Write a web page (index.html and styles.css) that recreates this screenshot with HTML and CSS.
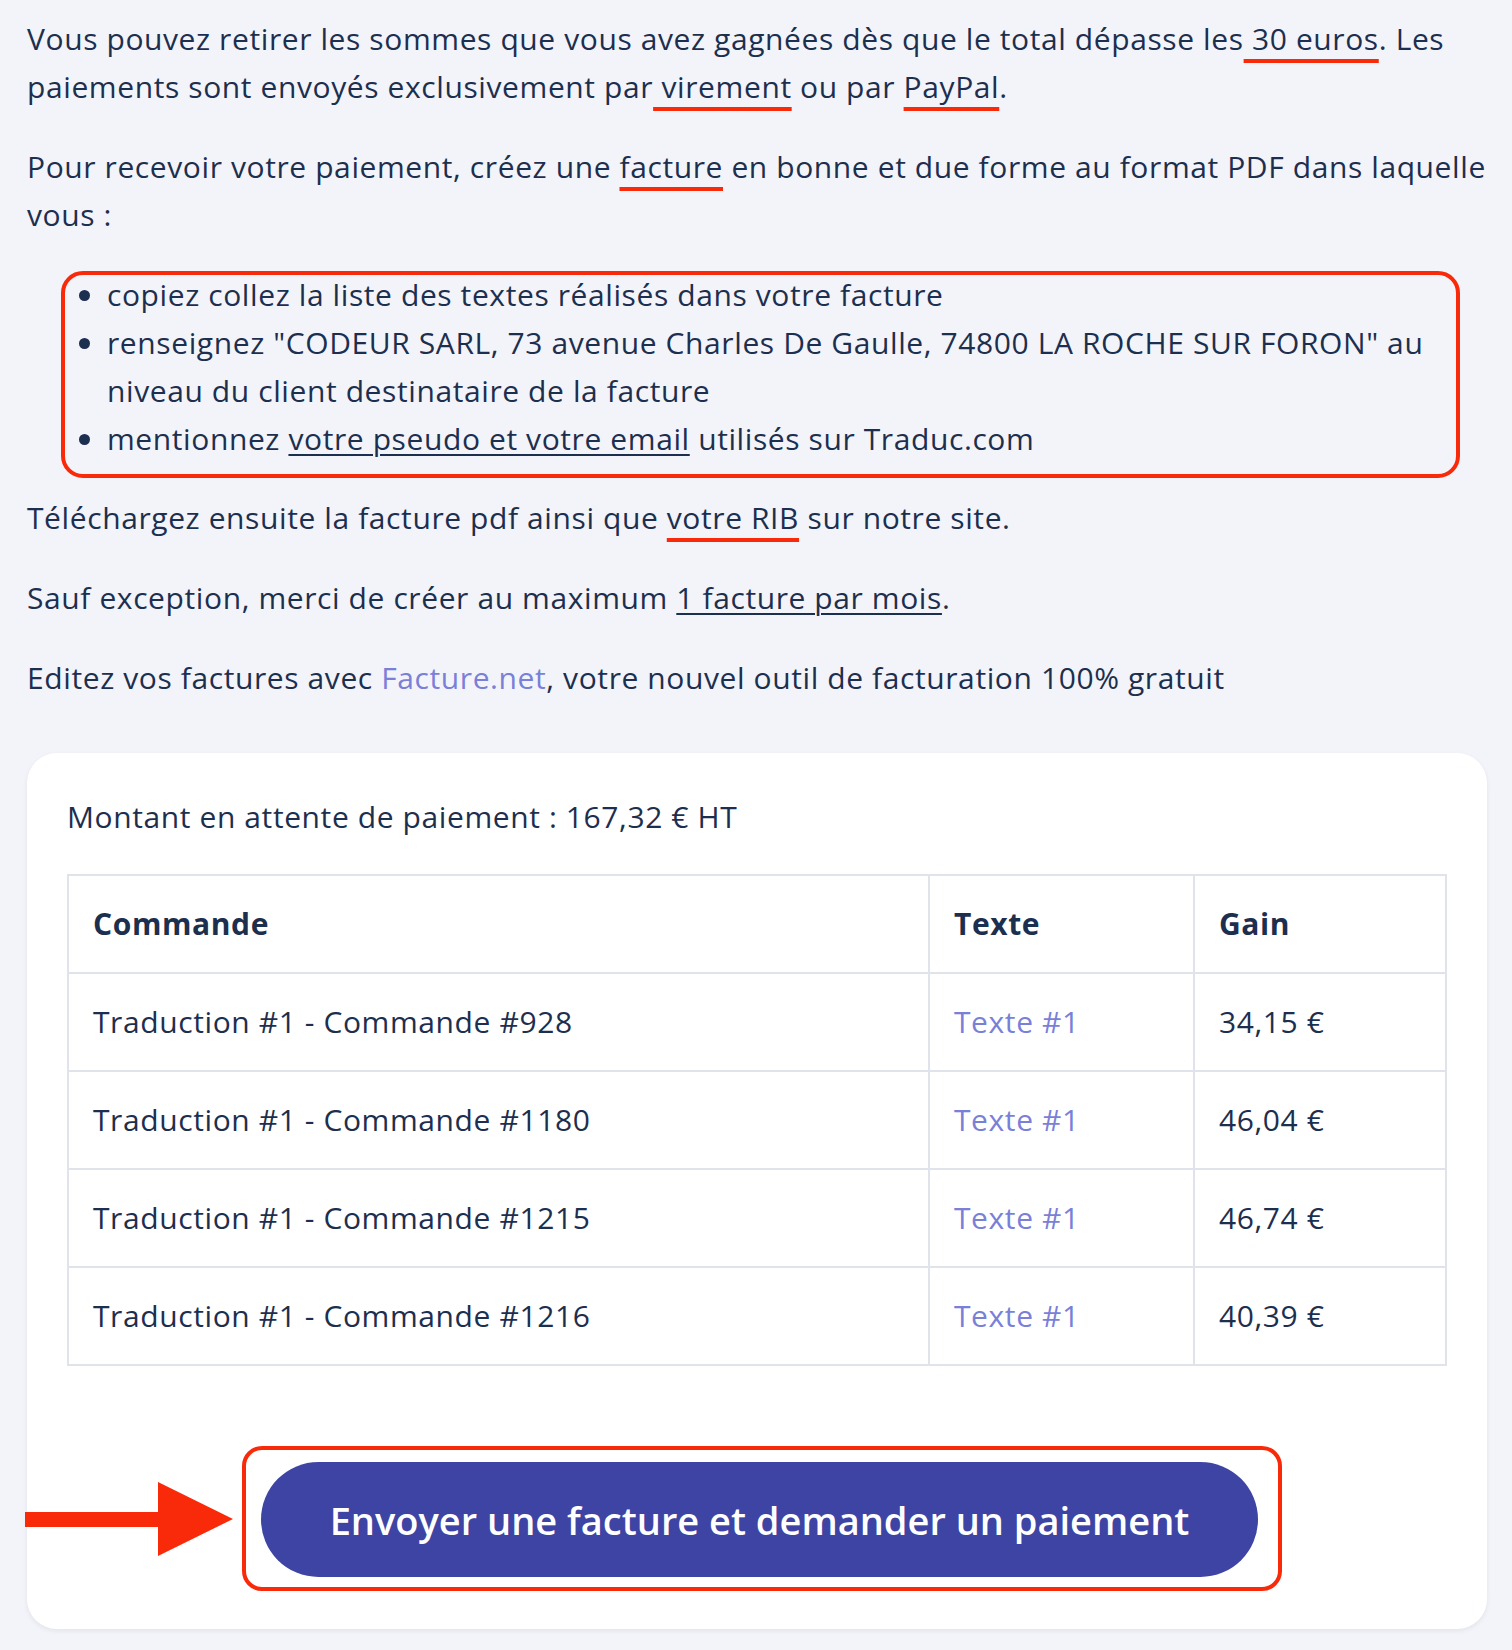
FILE: index.html
```html
<!DOCTYPE html>
<html lang="fr">
<head>
    <meta charset="UTF-8">
    <meta name="viewport" content="width=device-width, initial-scale=1.0">
    <title>Paiements</title>
    <link rel="stylesheet" href="styles.css">
</head>
<body>
    <div class="page">
        <p>Vous pouvez retirer les sommes que vous avez gagnées dès que le total dépasse les<span class="mark"> 30 euros</span>. Les paiements sont envoyés exclusivement par<span class="mark"> virement</span> ou par <span class="mark">PayPal</span>.</p>

        <p>Pour recevoir votre paiement, créez une <span class="mark">facture</span> en bonne et due forme au format PDF dans laquelle vous :</p>

        <ul class="steps">
            <li>copiez collez la liste des textes réalisés dans votre facture</li>
            <li>renseignez "CODEUR SARL, 73 avenue Charles De Gaulle, 74800 LA ROCHE SUR FORON" au niveau du client destinataire de la facture</li>
            <li>mentionnez <u>votre pseudo et votre email</u> utilisés sur Traduc.com</li>
        </ul>

        <p>Téléchargez ensuite la facture pdf ainsi que <span class="mark">votre RIB</span> sur notre site.</p>

        <p>Sauf exception, merci de créer au maximum <u>1 facture par mois</u>.</p>

        <p>Editez vos factures avec <a href="#" class="link">Facture.net</a>, votre nouvel outil de facturation 100% gratuit</p>

        <div class="card">
            <p class="amount">Montant en attente de paiement : 167,32 € HT</p>

            <table class="orders">
                <thead>
                    <tr>
                        <th class="col-order">Commande</th>
                        <th class="col-text">Texte</th>
                        <th>Gain</th>
                    </tr>
                </thead>
                <tbody>
                    <tr>
                        <td>Traduction #1 - Commande #928</td>
                        <td><a href="#" class="link">Texte #1</a></td>
                        <td>34,15 €</td>
                    </tr>
                    <tr>
                        <td>Traduction #1 - Commande #1180</td>
                        <td><a href="#" class="link">Texte #1</a></td>
                        <td>46,04 €</td>
                    </tr>
                    <tr>
                        <td>Traduction #1 - Commande #1215</td>
                        <td><a href="#" class="link">Texte #1</a></td>
                        <td>46,74 €</td>
                    </tr>
                    <tr>
                        <td>Traduction #1 - Commande #1216</td>
                        <td><a href="#" class="link">Texte #1</a></td>
                        <td>40,39 €</td>
                    </tr>
                </tbody>
            </table>

            <div class="action">
                <!-- flèche d'annotation -->
                <svg class="arrow" width="208" height="74" viewBox="0 0 208 74">
                    <rect x="0" y="30" width="134" height="15" fill="#f92a0a"/>
                    <polygon points="133,0 208,37 133,74" fill="#f92a0a"/>
                </svg>
                <div class="highlight">
                    <a href="#" class="btn">Envoyer une facture et demander un paiement</a>
                </div>
            </div>
        </div>
    </div>
</body>
</html>
```

FILE: styles.css
```css
body {
    margin: 0;
    background-color: #f3f4f9;
    font-family: "Open Sans", "Noto Sans", sans-serif;
    font-size: 30px;
    line-height: 48px;
    letter-spacing: 0.6px;
    color: #1d2f4e;
}

.page {
    width: 1460px;
    margin-left: 27px;
    padding: 15px 0 25px;
}

p {
    margin: 0 0 32px;
}

.mark {
    text-decoration: underline;
    text-decoration-color: #f92a0a;
    text-decoration-thickness: 4px;
    text-underline-offset: 9px;
}

u {
    text-decoration-thickness: 2px;
    text-underline-offset: 4px;
}

.link {
    color: #7a7fd8;
    text-decoration: none;
}

.steps {
    margin: 0 27px 16px 34px;
    padding: 0 0 15px 46px;
    border-radius: 22px;
    outline: 4px solid #f92a0a;
    outline-offset: -4px;
}

.card {
    margin-top: 51px;
    background-color: #fff;
    border-radius: 30px;
    box-shadow: 0 2px 5px rgba(20, 30, 60, 0.07);
    padding: 40px 40px 38px;
}

.amount {
    margin-bottom: 33px;
}

.orders {
    width: 100%;
    border-collapse: collapse;
}

.orders th,
.orders td {
    border: 2px solid #e0e4ea;
    padding: 24px 24px;
    text-align: left;
}

.orders th {
    font-weight: bold;
}

.col-order {
    width: 811px;
}

.col-text {
    width: 215px;
}

.action {
    position: relative;
    margin-top: 80px;
    display: flex;
    justify-content: center;
    padding-left: 10px;
}

.arrow {
    position: absolute;
    left: -42px;
    top: 36px;
}

.highlight {
    border: 4px solid #f92a0a;
    border-radius: 20px;
    padding: 12px 20px 10px 15px;
}

.btn {
    display: flex;
    align-items: center;
    justify-content: center;
    width: 997px;
    height: 115px;
    border-radius: 58px;
    background-color: #3d44a3;
    color: #fff;
    font-size: 38px;
    font-weight: 600;
    letter-spacing: 0;
    text-decoration: none;
}
```
